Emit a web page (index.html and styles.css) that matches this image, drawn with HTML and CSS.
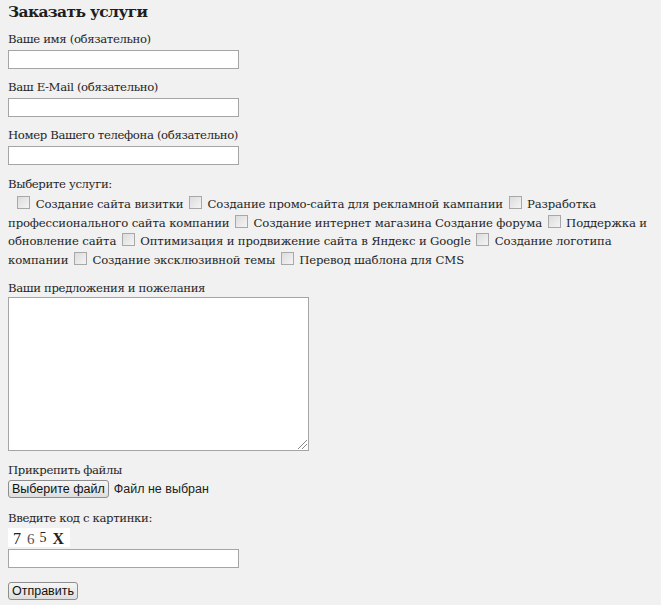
FILE: index.html
```html
<!DOCTYPE html>
<html lang="ru">
<head>
<meta charset="utf-8">
<title>Заказать услуги</title>
<link rel="stylesheet" href="styles.css">
</head>
<body>
<form class="order">
  <h3 class="title">Заказать услуги</h3>
  <div class="field">
    <label class="lbl">Ваше имя (обязательно)</label>
    <input class="txt" type="text">
  </div>
  <div class="field">
    <label class="lbl">Ваш E-Mail (обязательно)</label>
    <input class="txt" type="text">
  </div>
  <div class="field">
    <label class="lbl">Номер Вашего телефона (обязательно)</label>
    <input class="txt" type="text">
  </div>
  <div class="field services-field">
    <label class="lbl">Выберите услуги:</label>
    <div class="services">&nbsp;&nbsp;<span class="cb"></span> Создание сайта визитки <span class="cb"></span> Создание промо-сайта для рекламной кампании <span class="cb"></span> Разработка<br>профессионального сайта компании <span class="cb"></span> Создание интернет магазина Создание форума <span class="cb"></span> Поддержка и<br>обновление сайта <span class="cb"></span> Оптимизация и продвижение сайта в Яндекс и Google <span class="cb"></span> Создание логотипа<br>компании <span class="cb"></span> Создание эксклюзивной темы <span class="cb"></span> Перевод шаблона для CMS</div>
  </div>
  <div class="field">
    <label class="lbl">Ваши предложения и пожелания</label>
    <div class="area"><span class="grip"></span></div>
  </div>
  <div class="field file-field">
    <label class="lbl">Прикрепить файлы</label>
    <div class="file-row"><span class="btn">Выберите файл</span><span class="file-note">Файл не выбран</span></div>
  </div>
  <div class="field captcha-field">
    <label class="lbl">Введите код с картинки:</label>
    <div class="captcha"><span class="c1">7</span><span class="c2">6</span><span class="c3">5</span><span class="c4">X</span></div>
    <input class="txt captcha-input" type="text">
  </div>
  <div class="submit-row"><span class="btn submit">Отправить</span></div>
</form>
</body>
</html>
```

FILE: styles.css
```css
html, body {
  margin: 0;
  padding: 0;
  background: #f1f1f1;
}
body {
  font-family: "DejaVu Serif", "Liberation Serif", serif;
  font-size: 11.7px;
  letter-spacing: -0.37px;
  color: #262626;
}
.order {
  padding: 2px 8px 0 8px;
}
.title {
  margin: 0;
  font-size: 15.5px;
  letter-spacing: -0.65px;
  line-height: 20px;
  font-weight: bold;
  color: #1e1e1e;
}
.field {
  margin-top: 10px;
}
.field:first-of-type {
  margin-top: 9px;
}
.lbl {
  display: block;
  line-height: 16px;
  height: 16px;
}
.txt {
  display: block;
  box-sizing: border-box;
  width: 231px;
  height: 19px;
  margin: 3px 0 0 0;
  padding: 0;
  border: 1px solid #a5a5a5;
  background: #fff;
  outline: none;
}
.services-field {
  margin-top: 11px;
}
.services {
  margin-top: 3px;
  line-height: 18.7px;
  white-space: nowrap;
  letter-spacing: -0.16px;
}
.cb {
  display: inline-block;
  box-sizing: border-box;
  width: 13px;
  height: 13px;
  border: 1px solid #a8a8a8;
  background: linear-gradient(135deg, #dcdcdc, #f4f4f4);
  vertical-align: -1px;
  margin: 0 2px;
}
.area {
  position: relative;
  box-sizing: border-box;
  width: 301px;
  height: 154px;
  margin-top: 1px;
  border: 1px solid #a5a5a5;
  background: #fff;
}
.grip {
  position: absolute;
  right: 1px;
  bottom: 1px;
  width: 9px;
  height: 9px;
  background: linear-gradient(135deg, transparent 45%, #888 45%, #888 52%, transparent 52%, transparent 70%, #888 70%, #888 77%, transparent 77%);
}
.file-field {
  margin-top: 11px;
}
.file-row {
  display: flex;
  align-items: center;
  margin-top: 2px;
  font-family: "Liberation Sans", Arial, sans-serif;
  font-size: 12.5px;
  letter-spacing: 0;
}
.btn {
  display: inline-block;
  box-sizing: border-box;
  height: 18px;
  line-height: 16px;
  padding: 0 3px;
  border: 1px solid #8e8e8e;
  border-radius: 3px;
  background: linear-gradient(#f6f6f6, #dedede);
  font-family: "Liberation Sans", Arial, sans-serif;
  font-size: 12.5px;
  letter-spacing: 0;
  color: #111;
}
.file-note {
  margin-left: 5px;
  color: #222;
}
.captcha-field {
  margin-top: 12px;
}
.captcha {
  display: flex;
  align-items: flex-end;
  width: 62px;
  height: 19px;
  margin-top: 2px;
  padding-left: 5px;
  box-sizing: border-box;
  background: #fff;
  font-family: "Liberation Serif", serif;
  letter-spacing: 0;
  color: #222;
}
.c1 { font-size: 16px; margin-right: 6px; line-height: 17px; }
.c2 { font-size: 15px; margin-right: 5px; line-height: 15px; color: #555; }
.c3 { font-size: 14px; margin-right: 6px; line-height: 19px; }
.c4 { font-size: 16px; font-weight: bold; line-height: 17px; }
.captcha-input {
  margin-top: 2px;
}
.submit-row {
  margin-top: 14px;
}
.submit {
  padding: 0 3px;
}
```
